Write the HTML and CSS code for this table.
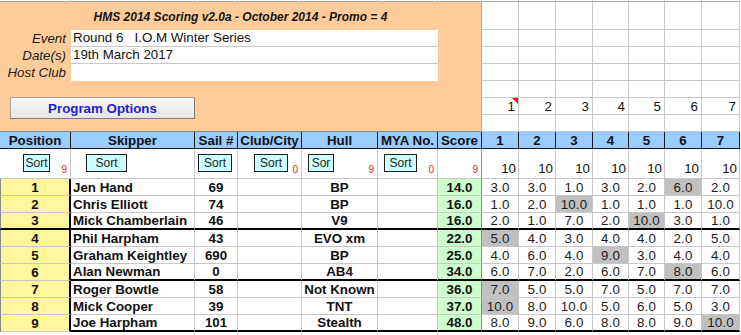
FILE: index.html
```html
<!DOCTYPE html>
<html>
<head>
<meta charset="utf-8">
<title>HMS 2014 Scoring</title>
<link rel="stylesheet" href="styles.css">
</head>
<body>
<div class="sheet">
  <div class="row strip">
    <div class="c"></div><div class="c"></div><div class="c"></div><div class="c"></div><div class="c"></div><div class="c"></div><div class="c"></div><div class="c"></div><div class="c"></div><div class="c"></div><div class="c"></div><div class="c"></div><div class="c"></div><div class="c"></div><div class="c end"></div>
  </div>

  <div class="top">
    <div class="panel">
      <div class="title">HMS 2014 Scoring v2.0a - October 2014 - Promo = 4</div>
      <div class="lbl">Event</div><div class="inp line">Round 6   I.O.M Winter Series</div>
      <div class="lbl">Date(s)</div><div class="inp line">19th March 2017</div>
      <div class="lbl">Host Club</div><div class="inp"></div>
      <div class="gap"></div>
      <div class="btnrow"><button class="prog">Program Options</button></div>
    </div>
    <div class="c"></div><div class="c"></div><div class="c"></div><div class="c"></div><div class="c"></div><div class="c"></div><div class="c"></div><div class="c end"></div>
    <div class="c"></div><div class="c"></div><div class="c"></div><div class="c"></div><div class="c"></div><div class="c"></div><div class="c"></div><div class="c end"></div>
    <div class="c"></div><div class="c"></div><div class="c"></div><div class="c"></div><div class="c"></div><div class="c"></div><div class="c"></div><div class="c end"></div>
    <div class="c"></div><div class="c"></div><div class="c"></div><div class="c"></div><div class="c"></div><div class="c"></div><div class="c"></div><div class="c end"></div>
    <div class="c"></div><div class="c"></div><div class="c"></div><div class="c"></div><div class="c"></div><div class="c"></div><div class="c"></div><div class="c end"></div>
    <div class="c num note">1<span class="tri"></span></div><div class="c num">2</div><div class="c num">3</div><div class="c num">4</div><div class="c num">5</div><div class="c num">6</div><div class="c num">7</div><div class="c end"></div>
    <div class="c"></div><div class="c"></div><div class="c"></div><div class="c"></div><div class="c"></div><div class="c"></div><div class="c"></div><div class="c end"></div>
  </div>

  <div class="row hdr">
    <div class="c">Position</div><div class="c">Skipper</div><div class="c">Sail #</div><div class="c">Club/City</div><div class="c">Hull</div><div class="c">MYA No.</div><div class="c">Score</div>
    <div class="c">1</div><div class="c">2</div><div class="c">3</div><div class="c">4</div><div class="c">5</div><div class="c">6</div><div class="c">7</div><div class="c end"></div>
  </div>

  <div class="row sorts">
    <div class="c"><button class="sb s-pos">Sort</button><span class="rn">9</span></div>
    <div class="c"><button class="sb s-skip">Sort</button></div>
    <div class="c"><button class="sb s-sail">Sort</button></div>
    <div class="c"><button class="sb s-club">Sort</button><span class="rn">0</span></div>
    <div class="c"><button class="sb s-hull">Sor</button><span class="rn">9</span></div>
    <div class="c"><button class="sb s-mya">Sort</button><span class="rn">0</span></div>
    <div class="c scol"><span class="rn">9</span></div>
    <div class="c"><span class="ten">10</span></div><div class="c"><span class="ten">10</span></div><div class="c"><span class="ten">10</span></div><div class="c"><span class="ten">10</span></div><div class="c"><span class="ten">10</span></div><div class="c"><span class="ten">10</span></div><div class="c"><span class="ten">10</span></div><div class="c end"></div>
  </div>

  <div class="row data">
    <div class="c pos">1</div><div class="c nm">Jen Hand</div><div class="c ctr">69</div><div class="c"></div><div class="c ctr">BP</div><div class="c"></div><div class="c score">14.0</div>
    <div class="c rv">3.0</div><div class="c rv">3.0</div><div class="c rv">1.0</div><div class="c rv">3.0</div><div class="c rv">2.0</div><div class="c rv hl">6.0</div><div class="c rv">2.0</div><div class="c end"></div>
  </div>
  <div class="row data">
    <div class="c pos">2</div><div class="c nm">Chris Elliott</div><div class="c ctr">74</div><div class="c"></div><div class="c ctr">BP</div><div class="c"></div><div class="c score">16.0</div>
    <div class="c rv">1.0</div><div class="c rv">2.0</div><div class="c rv hl">10.0</div><div class="c rv">1.0</div><div class="c rv">1.0</div><div class="c rv">1.0</div><div class="c rv">10.0</div><div class="c end"></div>
  </div>
  <div class="row data brk-all">
    <div class="c pos">3</div><div class="c nm">Mick Chamberlain</div><div class="c ctr">46</div><div class="c"></div><div class="c ctr">V9</div><div class="c"></div><div class="c score">16.0</div>
    <div class="c rv">2.0</div><div class="c rv">1.0</div><div class="c rv">7.0</div><div class="c rv">2.0</div><div class="c rv hl">10.0</div><div class="c rv">3.0</div><div class="c rv">1.0</div><div class="c end"></div>
  </div>
  <div class="row data">
    <div class="c pos">4</div><div class="c nm">Phil Harpham</div><div class="c ctr">43</div><div class="c"></div><div class="c ctr">EVO xm</div><div class="c"></div><div class="c score">22.0</div>
    <div class="c rv hl">5.0</div><div class="c rv">4.0</div><div class="c rv">3.0</div><div class="c rv">4.0</div><div class="c rv">4.0</div><div class="c rv">2.0</div><div class="c rv">5.0</div><div class="c end"></div>
  </div>
  <div class="row data">
    <div class="c pos">5</div><div class="c nm">Graham Keightley</div><div class="c ctr">690</div><div class="c"></div><div class="c ctr">BP</div><div class="c"></div><div class="c score">25.0</div>
    <div class="c rv">4.0</div><div class="c rv">6.0</div><div class="c rv">4.0</div><div class="c rv hl">9.0</div><div class="c rv">3.0</div><div class="c rv">4.0</div><div class="c rv">4.0</div><div class="c end"></div>
  </div>
  <div class="row data brk">
    <div class="c pos">6</div><div class="c nm">Alan Newman</div><div class="c ctr">0</div><div class="c"></div><div class="c ctr">AB4</div><div class="c"></div><div class="c score">34.0</div>
    <div class="c rv">6.0</div><div class="c rv">7.0</div><div class="c rv">2.0</div><div class="c rv">6.0</div><div class="c rv">7.0</div><div class="c rv hl">8.0</div><div class="c rv">6.0</div><div class="c end"></div>
  </div>
  <div class="row data">
    <div class="c pos">7</div><div class="c nm">Roger Bowtle</div><div class="c ctr">58</div><div class="c"></div><div class="c ctr">Not Known</div><div class="c"></div><div class="c score">36.0</div>
    <div class="c rv hl">7.0</div><div class="c rv">5.0</div><div class="c rv">5.0</div><div class="c rv">7.0</div><div class="c rv">5.0</div><div class="c rv">7.0</div><div class="c rv">7.0</div><div class="c end"></div>
  </div>
  <div class="row data">
    <div class="c pos">8</div><div class="c nm">Mick Cooper</div><div class="c ctr">39</div><div class="c"></div><div class="c ctr">TNT</div><div class="c"></div><div class="c score">37.0</div>
    <div class="c rv hl">10.0</div><div class="c rv">8.0</div><div class="c rv">10.0</div><div class="c rv">5.0</div><div class="c rv">6.0</div><div class="c rv">5.0</div><div class="c rv">3.0</div><div class="c end"></div>
  </div>
  <div class="row data brk">
    <div class="c pos">9</div><div class="c nm">Joe Harpham</div><div class="c ctr">101</div><div class="c"></div><div class="c ctr">Stealth</div><div class="c"></div><div class="c score">48.0</div>
    <div class="c rv">8.0</div><div class="c rv">9.0</div><div class="c rv">6.0</div><div class="c rv">8.0</div><div class="c rv">8.0</div><div class="c rv">9.0</div><div class="c rv hl">10.0</div><div class="c end"></div>
  </div>
</div>
</body>
</html>
```

FILE: styles.css
```css
:root {
  --cols: 71px 124px 43px 64px 76px 60px 44px 37px 37px 37px 36px 36px 37px 38px 1fr;
  --grid: #c8c8c8;
}

body {
  margin: 0;
  width: 741px;
  height: 335px;
  overflow: hidden;
  background: #ffffff;
  font-family: "Liberation Sans", Arial, sans-serif;
  font-size: 13.33px;
  color: #111111;
}

.sheet {
  display: flex;
  flex-direction: column;
}

.row {
  display: grid;
  grid-template-columns: var(--cols);
}

.c {
  box-sizing: border-box;
  border-right: 1px solid var(--grid);
  border-bottom: 1px solid var(--grid);
  overflow: hidden;
  white-space: nowrap;
  display: flex;
  align-items: center;
  min-width: 0;
}

.c.end {
  border: 0;
}

/* top strip of previous row */
.strip {
  grid-template-rows: 2px;
}
.strip .c {
  border-bottom-color: #a8a8a8;
}

/* top section */
.top {
  display: grid;
  grid-template-columns: 482px 37px 37px 37px 36px 36px 37px 38px 1fr;
  grid-template-rows: 28px repeat(6, 17px);
}

.panel {
  grid-row: 1 / -1;
  grid-column: 1;
  box-sizing: border-box;
  background: #ffcc99;
  border-right: 1px solid #d2a67c;
  border-bottom: 1px solid #8a8a8a;
  display: grid;
  grid-template-columns: 71px 367px 1fr;
  grid-template-rows: 28px 17px 17px 17px 17px 1fr;
}

.title {
  grid-column: 1 / -1;
  font-size: 12px;
  font-weight: bold;
  font-style: italic;
  text-align: center;
  line-height: 28px;
  padding-top: 1px;
  color: #151515;
}

.lbl {
  grid-column: 1;
  text-align: right;
  padding-right: 5px;
  font-style: italic;
  line-height: 17px;
  color: #1a1a1a;
}

.inp {
  grid-column: 2;
  background: #ffffff;
  box-sizing: border-box;
  line-height: 16px;
  padding-left: 2px;
  white-space: pre;
  color: #111;
}

.inp.line {
  border-bottom: 1px solid #c8c8c8;
}

.gap {
  grid-column: 1 / -1;
}

.btnrow {
  grid-column: 1 / -1;
  padding-left: 10px;
}

.prog {
  display: block;
  margin: -1px 0 0 0;
  width: 185px;
  height: 22px;
  box-sizing: border-box;
  border: 1px solid #a4a4a4;
  border-right-color: #7c7c7c;
  border-bottom-color: #7c7c7c;
  background: linear-gradient(#f7f7f7, #e6e6e6);
  font-family: "Liberation Sans", Arial, sans-serif;
  font-size: 13.33px;
  font-weight: bold;
  color: #2222cc;
  padding: 0;
}

.num {
  justify-content: flex-end;
  padding-right: 3px;
  color: #111;
}

.note {
  position: relative;
}

.tri {
  position: absolute;
  top: 0;
  right: 0;
  width: 0;
  height: 0;
  border-left: 6px solid transparent;
  border-top: 6px solid #ee1111;
}

/* header */
.hdr {
  grid-template-rows: 17px;
}
.hdr .c {
  background: #99ccff;
  border-right-color: #1a1a1a;
  border-bottom-color: #1a1a1a;
  justify-content: center;
  font-weight: bold;
  color: #121212;
}
.hdr .c.end {
  background: none;
  border: 0;
}

/* sort row */
.sorts {
  grid-template-rows: 30px;
}
.sorts .c {
  align-items: flex-start;
}
.sorts .scol {
  border-right-color: #8c8c8c;
}

.sb {
  margin-top: 5px;
  height: 18px;
  box-sizing: border-box;
  border: 1px solid #1e1e1e;
  background: #ccffff;
  font-family: "Liberation Sans", Arial, sans-serif;
  font-size: 12px;
  color: #1e1e1e;
  padding: 0;
  display: flex;
  align-items: center;
  justify-content: center;
  flex: none;
}

.s-pos { margin-left: 23px; width: 27px; }
.s-skip { margin-left: 15px; width: 41px; }
.s-sail { margin-left: 3px; width: 34px; }
.s-club { margin-left: 16px; width: 34px; }
.s-hull { margin-left: 6px; width: 26px; }
.s-mya { margin-left: 6px; width: 33px; }

.rn {
  margin-left: auto;
  align-self: flex-end;
  font-size: 10px;
  line-height: 10px;
  color: #e52525;
  padding-right: 3px;
  margin-bottom: 3px;
}

.ten {
  margin-left: auto;
  align-self: flex-end;
  line-height: 13px;
  padding-right: 2px;
  margin-bottom: 3px;
  color: #111;
}

/* data rows */
.data {
  grid-template-rows: 17px;
}

.pos {
  background: #fff59c;
  border-left: 1px solid #8a8a8a;
  border-right: 2px solid #000000;
  justify-content: center;
  font-weight: bold;
}

.nm {
  font-weight: bold;
  padding-left: 2px;
}

.ctr {
  justify-content: center;
  font-weight: bold;
}

.score {
  background: #ccffcc;
  border-right-color: #8c8c8c;
  justify-content: center;
  font-weight: bold;
}

.rv {
  justify-content: center;
  letter-spacing: 0.2px;
  color: #1c1c1c;
}

.hl {
  background: #c0c0c0;
}

.brk-all .c:not(.end) {
  border-bottom: 2px solid #000000;
}

.brk .c:not(.end):not(.pos) {
  border-bottom: 2px solid #000000;
}
```
